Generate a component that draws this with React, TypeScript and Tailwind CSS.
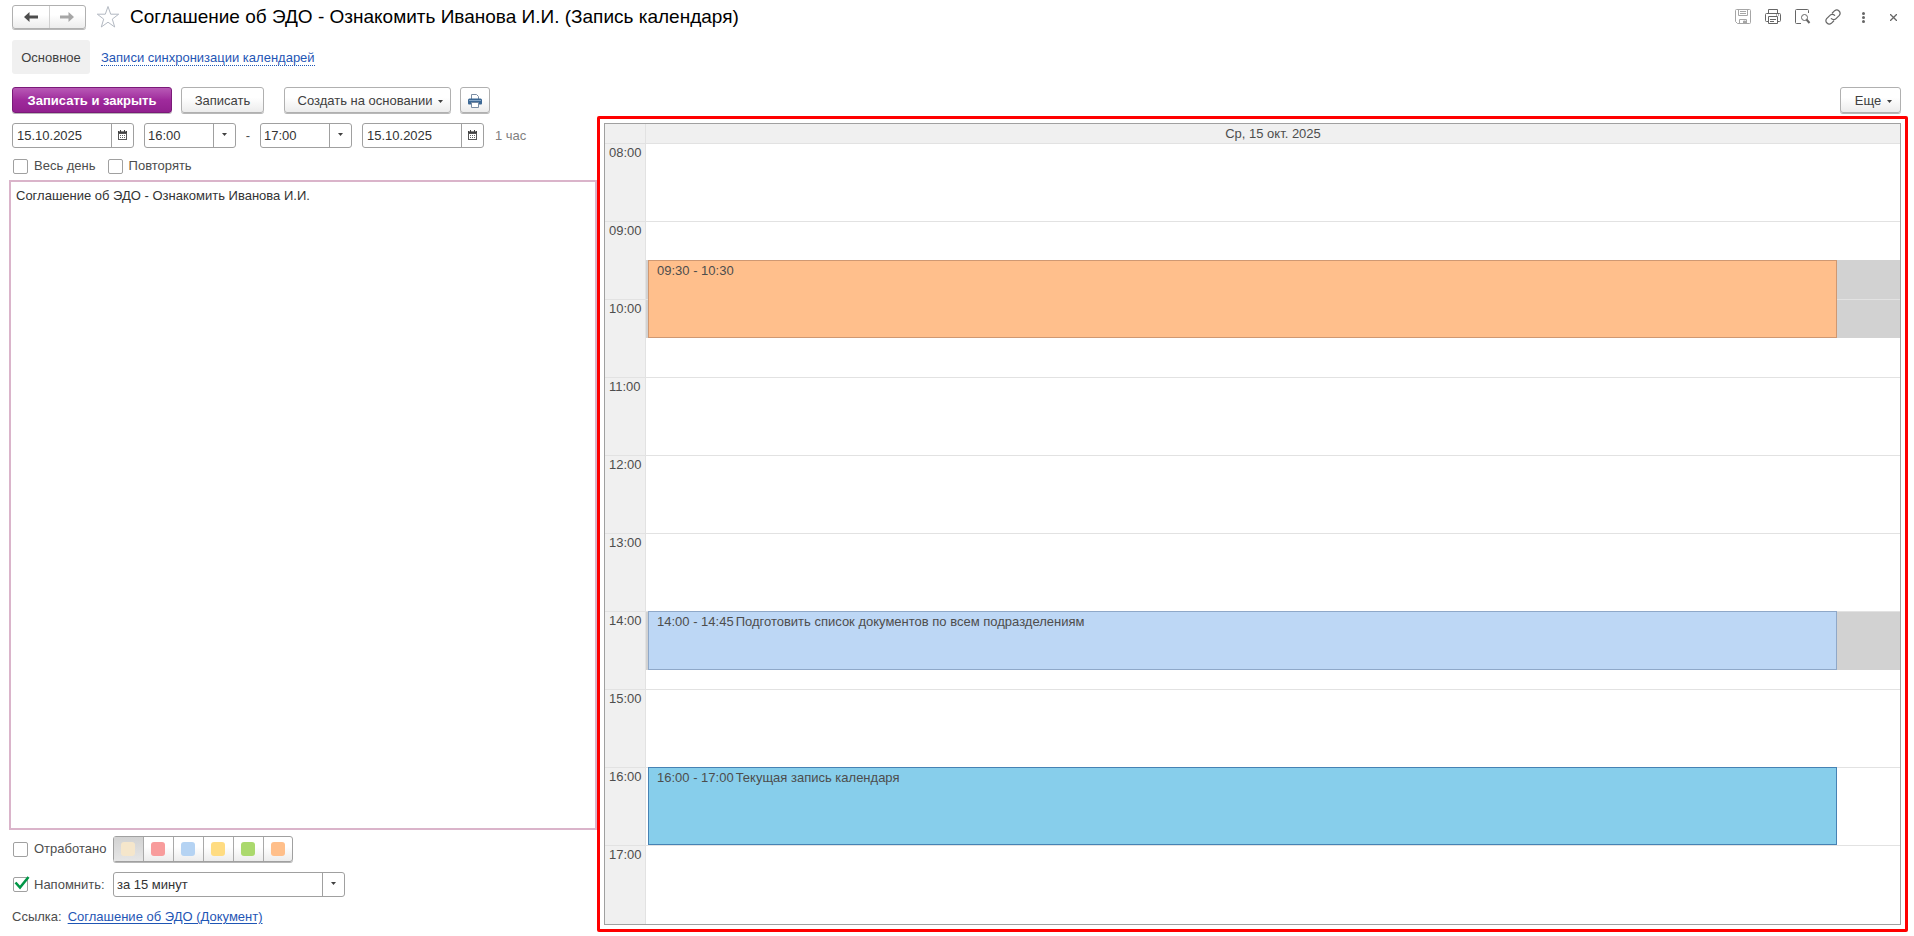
import React, {useState} from 'react';

const HOUR = 78;
const FIRST_HOUR = 8;

const hours = ['08:00', '09:00', '10:00', '11:00', '12:00', '13:00', '14:00', '15:00', '16:00', '17:00'];

const events = [
  {start: 9.5, end: 10.5, time: '09:30 - 10:30', title: '', busy: true, color: 'bg-[#ffbf8c] border-[#cf9872]'},
  {start: 14, end: 14.75, time: '14:00 - 14:45', title: 'Подготовить список документов по всем подразделениям', busy: true, color: 'bg-[#bdd7f5] border-[#8fa8c8]'},
  {start: 16, end: 17, time: '16:00 - 17:00', title: 'Текущая запись календаря', busy: false, color: 'bg-[#87ceeb] border-[#4682b4]'},
];

const colors = [
  {name: 'Бежевый', cls: 'bg-[#f5e6cb]'},
  {name: 'Красный', cls: 'bg-[#f89c9c]'},
  {name: 'Синий', cls: 'bg-[#b5d3f3]'},
  {name: 'Желтый', cls: 'bg-[#ffdc82]'},
  {name: 'Зеленый', cls: 'bg-[#abd96d]'},
  {name: 'Оранжевый', cls: 'bg-[#ffbf8a]'},
];

const buttonCls = 'flex h-[26px] items-center justify-center rounded-[3px] border border-[#b0b0b0] bg-linear-to-b from-white from-40% to-[#ececec] pt-0.5 text-[#404040] shadow-[0_1px_0_#b8b8b8]';
const boxCls = 'h-[25px] rounded-[3px] border border-[#a0a0a0] bg-white';

function Caret() {
  return (
    <svg width="5" height="3" viewBox="0 0 5 3" className="fill-[#404040]">
      <path d="M0 0h5L2.5 3z" />
    </svg>
  );
}

function Arrow({className}: {className: string}) {
  return (
    <svg width="14" height="12" viewBox="0 0 14 12" className={className}>
      <path d="M0 6l5.500-5v3.500H14v3H5.500V11z" />
    </svg>
  );
}

function CalendarIcon() {
  return (
    <svg width="9" height="10" viewBox="0 0 9 10" shapeRendering="crispEdges">
      <path d="M0 1h9v9H0z" fill="#555" />
      <path d="M1 4h7v5H1z" fill="#fff" />
      <path d="M2 0h1v2H2zM6 0h1v2H6z" fill="#404040" />
      <path d="M0 1h9v2H0z" fill="#404040" />
      <path d="M1 1h1v1H1zM3 1h3v1H3zM7 1h1v1H7z" fill="#8a8a8a" />
      <path d="M2 5h1v1H2zM4 5h1v1H4zM6 5h1v1H6zM2 7h1v1H2zM4 7h1v1H4zM6 7h1v1H6z" fill="#666" />
    </svg>
  );
}

function DateField({label}: {label: string}) {
  return (
    <div className={`${boxCls} flex w-[122px]`}>
      <input aria-label={label} defaultValue="15.10.2025" className="min-w-0 flex-1 px-1 text-[#333] outline-none" />
      <button aria-label="Выбрать дату" className="flex w-[22px] items-center justify-center border-l border-[#a0a0a0] pb-0.5">
        <CalendarIcon />
      </button>
    </div>
  );
}

function SelectField({label, value, options, className}: {label: string; value: string; options: string[]; className: string}) {
  return (
    <div className={`relative ${className}`}>
      <select aria-label={label} defaultValue={value} className={`${boxCls} w-full appearance-none pr-6 pl-[3px] text-[#333] outline-none`}>
        {options.map((o) => <option key={o}>{o}</option>)}
      </select>
      <span className="pointer-events-none absolute inset-y-px right-px flex w-[22px] items-center justify-center border-l border-[#a0a0a0] pb-0.5">
        <Caret />
      </span>
    </div>
  );
}

function Check({label, checked = false}: {label: string; checked?: boolean}) {
  return (
    <label className="flex items-center gap-1.5 text-[#4d4d4d]">
      <span className="relative flex">
        <input type="checkbox" defaultChecked={checked} className="peer size-[15px] appearance-none rounded-xs border border-[#a0a0a0] bg-white" />
        <svg width="15" height="15" viewBox="0 0 15 15" className="pointer-events-none absolute inset-0 hidden overflow-visible peer-checked:block">
          <path d="M2.500 5.500L7 10.500L15.500 0" fill="none" stroke="#009646" strokeWidth="2.600" />
        </svg>
      </span>
      {label}
    </label>
  );
}

function Header() {
  return (
    <header className="flex items-center pt-[5px] pr-[13px] pl-3">
      <div className="flex h-6 w-[74px] rounded-[3px] border border-[#b0b0b0] bg-linear-to-b from-white from-40% to-[#ececec] shadow-[0_1px_0_#b8b8b8]">
        <button aria-label="Назад" className="flex flex-1 items-center justify-center border-r border-[#d0d0d0]">
          <Arrow className="fill-[#4d4d4d]" />
        </button>
        <button aria-label="Вперед" className="flex flex-1 items-center justify-center">
          <Arrow className="rotate-180 fill-[#a6a6a6]" />
        </button>
      </div>
      <button aria-label="В избранное" className="ml-2.5">
        <svg width="24" height="24" viewBox="0 0 24 24" fill="none" stroke="#b3b9c2">
          <path d="M12 1.500l2.700 7.700h8l-6.400 4.900 2.400 7.900-6.700-4.800L5.300 22l2.400-7.900L1.300 9.200h8z" />
        </svg>
      </button>
      <h1 className="ml-2.5 flex-1 text-[19px] leading-6 text-black">Соглашение об ЭДО - Ознакомить Иванова И.И. (Запись календаря)</h1>
      <div className="flex items-center gap-3.5 text-[#666]">
        <button aria-label="Сохранить" className="text-[#a6a6a6]">
          <svg width="16" height="16" viewBox="0 0 16 16" fill="none" stroke="currentColor">
            <path d="M.5 1.500q0-1 1-1h13q1 0 1 1v12q0 1-1 1H2.500l-2-2z" />
            <path d="M3.500.5v6h9v-6M5 2.500h6M5 4.500h6M4.500 14.500v-4h7v4" />
            <path d="M8.500 12h2v2h-2z" fill="currentColor" />
          </svg>
        </button>
        <button aria-label="Печать">
          <svg width="16" height="16" viewBox="0 0 16 16" fill="none" stroke="currentColor">
            <path d="M3.500 4.500v-4h9v4M3.500 12.500h-2q-1 0-1-1v-6q0-1 1-1h13q1 0 1 1v6q0 1-1 1h-2" />
            <path d="M3.500 7.500h9v7h-9zM5 10.500h6M5 12.500h4M11 6h1M13 6h1" />
          </svg>
        </button>
        <button aria-label="Просмотр">
          <svg width="16" height="16" viewBox="0 0 16 16" fill="none" stroke="currentColor">
            <path d="M13.500 4V1.500q0-1-1-1h-11q-1 0-1 1v12q0 1 1 1H6" />
            <circle cx="9.500" cy="8.500" r="3" />
            <path d="M11.500 10.500l3 3.500" strokeWidth="2" />
          </svg>
        </button>
        <button aria-label="Ссылка">
          <svg width="16" height="16" viewBox="0 0 24 24" fill="none" stroke="currentColor" strokeWidth="1.800" strokeLinecap="round">
            <path d="M9.500 14.500a5 5 0 0 0 7.500-.5l4.500-4.500a5 5 0 0 0-7-7L11 6" />
            <path d="M14.500 9.500a5 5 0 0 0-7.500.5l-4.500 4.500a5 5 0 0 0 7 7L13 18" />
          </svg>
        </button>
        <button aria-label="Меню" className="flex w-4 justify-center">
          <svg width="3" height="11" viewBox="0 0 3 11" fill="currentColor">
            <circle cx="1.500" cy="1.500" r="1.500" />
            <circle cx="1.500" cy="5.500" r="1.500" />
            <circle cx="1.500" cy="9.500" r="1.500" />
          </svg>
        </button>
        <button aria-label="Закрыть" className="flex w-4 justify-center">
          <svg width="7" height="7" viewBox="0 0 7 7" fill="none" stroke="currentColor" strokeWidth="1.300">
            <path d="M0 0l7 7M7 0L0 7" />
          </svg>
        </button>
      </div>
    </header>
  );
}

function Schedule() {
  return (
    <section className="flex flex-col rounded-xs border-3 border-[#f00] p-1">
      <div className="flex flex-1 flex-col border border-[#a0a0a0] text-[#4d4d4d]">
        <div className="flex h-[19px] bg-[#f0f0f0]">
          <div className="w-[41px] border-r border-[#e2e2e2]" />
          <div className="flex-1 text-center leading-5">Ср, 15 окт. 2025</div>
        </div>
        <div className="flex flex-1">
          <div className="w-[41px] border-r border-[#e2e2e2] bg-[#f0f0f0]">
            {hours.map((h) => (
              <div key={h} className="h-[78px] border-t border-[#e2e2e2] pl-1 leading-[18px]">{h}</div>
            ))}
          </div>
          <div className="relative flex-1">
            {events.filter((e) => e.busy).map((e) => (
              <div key={e.time} className="absolute inset-x-0 bg-[#d2d2d2]" style={{top: (e.start - FIRST_HOUR) * HOUR, height: (e.end - e.start) * HOUR}} />
            ))}
            {hours.map((h) => <div key={h} className="relative h-[78px] border-t border-[#e2e2e2]" />)}
            {events.map((e) => (
              <div
                key={e.time}
                className={`absolute right-[5%] left-0.5 flex gap-0.5 border pl-2 leading-5 ${e.color}`}
                style={{top: (e.start - FIRST_HOUR) * HOUR, height: (e.end - e.start) * HOUR}}
              >
                <span>{e.time}</span>
                <span>{e.title}</span>
              </div>
            ))}
          </div>
        </div>
      </div>
    </section>
  );
}

export default function App() {
  const [color, setColor] = useState(0);

  return (
    <div className="flex min-h-screen flex-col bg-white font-['Liberation_Sans',Arial,sans-serif] text-[13px] leading-4">
      <Header />

      <nav className="flex items-center gap-[11px] pt-[11px] pl-3">
        <button className="flex h-[34px] w-[78px] items-center justify-center rounded-[3px] bg-[#f0f0f0] pt-0.5 text-[#404040]">Основное</button>
        <a href="#sync" className="mt-0.5 border-b border-dotted border-[#1f56b5] leading-[15px] text-[#1f56b5]">Записи синхронизации календарей</a>
      </nav>

      <div className="flex pt-[13px] pr-[13px] pl-3">
        <button className="flex h-[26px] w-[160px] items-center justify-center rounded-[3px] border border-[#7a1a78] bg-linear-to-b from-[#b858b6] via-[#9f2a9c] to-[#92208f] pt-0.5 font-bold text-white shadow-[0_1px_0_#b8b8b8]">Записать и закрыть</button>
        <button className={`${buttonCls} ml-[9px] w-[83px]`}>Записать</button>
        <button className={`${buttonCls} ml-5 w-[167px] gap-1.5 pl-1.5`}>
          Создать на основании
          <Caret />
        </button>
        <button aria-label="Печать" className={`${buttonCls} ml-[9px] w-[30px]`}>
          <svg width="14" height="14" viewBox="0 0 14 14">
            <path d="M3.500 5V.5h5l2 2V5" fill="#fff" stroke="#7a8ca3" />
            <path d="M1.500 4.500h11q1.500 0 1.500 1.500v3.500q0 1-1 1H1q-1 0-1-1V6q0-1.500 1.500-1.500z" fill="#3c6895" />
            <path d="M1 6.500h12" stroke="#86a7c8" />
            <path d="M3.500 8.500h7v5h-7z" fill="#fff" stroke="#7a8ca3" />
          </svg>
        </button>
        <button className={`${buttonCls} ml-auto w-[61px] gap-1.5 pl-1.5`}>
          Еще
          <Caret />
        </button>
      </div>

      <main className="grid flex-1 grid-cols-[597fr_1311fr] pt-[3px] pr-1.5 pb-1">
        <div className="flex flex-col pt-[7px] pl-[9px]">
          <div className="flex items-center pl-[3px]">
            <DateField label="Дата начала" />
            <SelectField label="Время начала" value="16:00" options={hours} className="ml-2.5 w-[92px]" />
            <span className="w-6 text-center text-[#4d4d4d]">-</span>
            <SelectField label="Время окончания" value="17:00" options={hours} className="w-[92px]" />
            <div className="ml-2.5"><DateField label="Дата окончания" /></div>
            <span className="ml-[11px] text-[#808080]">1 час</span>
          </div>
          <div className="flex gap-3 pt-2.5 pb-1.5 pl-1">
            <Check label="Весь день" />
            <Check label="Повторять" />
          </div>
          <textarea
            aria-label="Описание"
            defaultValue="Соглашение об ЭДО - Ознакомить Иванова И.И."
            className="flex-1 resize-none border-2 border-[#dab4ca] px-[5px] py-1.5 text-[#333] outline-none"
          />
          <div className="flex flex-col gap-2.5 pt-1.5 pb-[5px] pl-[3px]">
            <div className="flex items-center">
              <div className="w-[101px] pl-px"><Check label="Отработано" /></div>
              <div className="flex h-[26px] rounded-[3px] border border-[#a0a0a0] bg-linear-to-b from-white from-40% to-[#ececec] shadow-[0_1px_0_#b8b8b8]">
                {colors.map((c, i) => (
                  <button
                    key={c.name}
                    aria-label={c.name}
                    aria-pressed={color === i}
                    onClick={() => setColor(i)}
                    className="flex w-[30px] items-center justify-center border-r border-[#a9a9a9] pr-px last:w-[28px] last:border-r-0 aria-pressed:bg-linear-to-b aria-pressed:from-[#d2d2d2] aria-pressed:to-[#e6e6e6]"
                  >
                    <span className={`size-3.5 rounded-[3px] ${c.cls}`} />
                  </button>
                ))}
              </div>
            </div>
            <div className="flex items-center">
              <div className="w-[101px] pl-px"><Check label="Напомнить:" checked /></div>
              <SelectField label="Срок напоминания" value="за 15 минут" options={['за 5 минут', 'за 15 минут', 'за 1 час']} className="w-[232px]" />
            </div>
            <div className="flex items-center gap-1.5 py-0.5 text-[#4d4d4d]">
              Ссылка:
              <a href="#document" className="text-[#1f56b5] underline underline-offset-2">Соглашение об ЭДО (Документ)</a>
            </div>
          </div>
        </div>
        <Schedule />
      </main>
    </div>
  );
}
